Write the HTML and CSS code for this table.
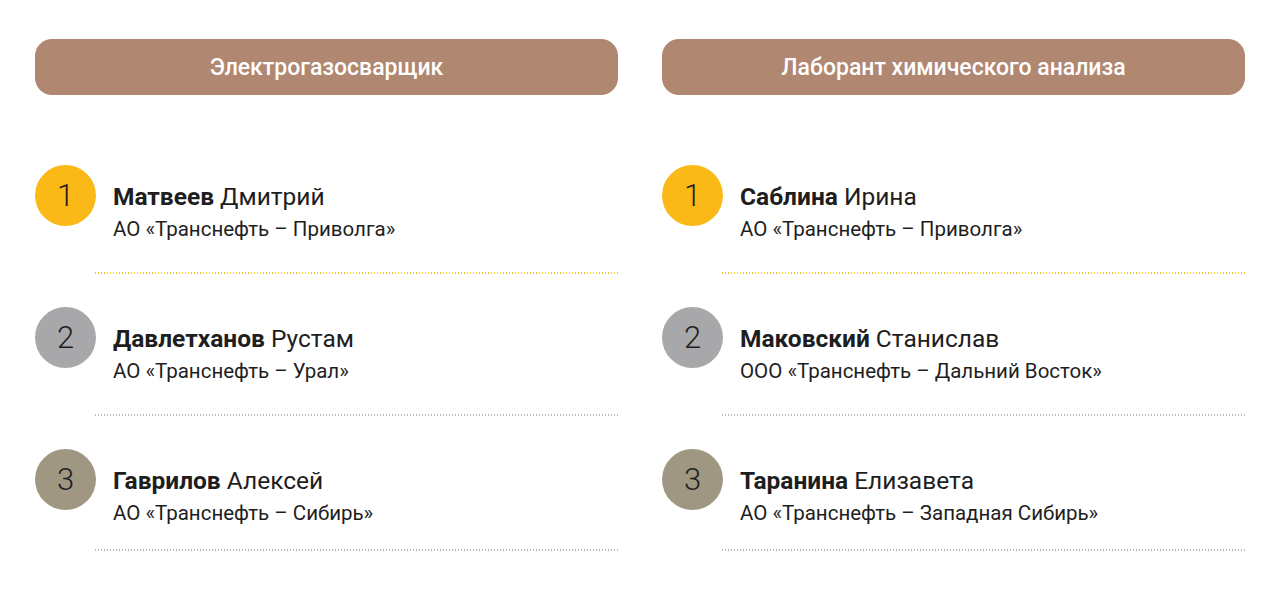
FILE: index.html
```html
<!DOCTYPE html>
<html lang="ru">
<head>
<meta charset="utf-8">
<title>Победители</title>
<link rel="stylesheet" href="styles.css">
</head>
<body>
<div class="page">
  <section class="col">
    <div class="head">Электрогазосварщик</div>
    <div class="row">
      <div class="place gold">1</div>
      <div class="info">
        <div class="name"><b>Матвеев</b> Дмитрий</div>
        <div class="org">АО «Транснефть – Приволга»</div>
      </div>
    </div>
    <div class="line line-gold"></div>
    <div class="row">
      <div class="place silver">2</div>
      <div class="info">
        <div class="name"><b>Давлетханов</b> Рустам</div>
        <div class="org">АО «Транснефть – Урал»</div>
      </div>
    </div>
    <div class="line"></div>
    <div class="row">
      <div class="place bronze">3</div>
      <div class="info">
        <div class="name"><b>Гаврилов</b> Алексей</div>
        <div class="org">АО «Транснефть – Сибирь»</div>
      </div>
    </div>
    <div class="line line-last"></div>
  </section>
  <section class="col">
    <div class="head">Лаборант химического анализа</div>
    <div class="row">
      <div class="place gold">1</div>
      <div class="info">
        <div class="name"><b>Саблина</b> Ирина</div>
        <div class="org">АО «Транснефть – Приволга»</div>
      </div>
    </div>
    <div class="line line-gold"></div>
    <div class="row">
      <div class="place silver">2</div>
      <div class="info">
        <div class="name"><b>Маковский</b> Станислав</div>
        <div class="org">ООО «Транснефть – Дальний Восток»</div>
      </div>
    </div>
    <div class="line"></div>
    <div class="row">
      <div class="place bronze">3</div>
      <div class="info">
        <div class="name"><b>Таранина</b> Елизавета</div>
        <div class="org">АО «Транснефть – Западная Сибирь»</div>
      </div>
    </div>
    <div class="line line-last"></div>
  </section>
</div>
</body>
</html>
```

FILE: styles.css
```css
* { box-sizing: border-box; }
html, body {
  margin: 0;
  padding: 0;
  background: #fff;
}
body {
  font-family: Roboto, "Noto Sans", "Liberation Sans", sans-serif;
  color: #1e1e1e;
}
.page {
  display: grid;
  grid-template-columns: 585px 585px;
  column-gap: 42px;
  padding: 39px 0 0 35px;
}
.col {
  display: flex;
  flex-direction: column;
}
.head {
  width: 583px;
  height: 56px;
  border-radius: 17px;
  background: #b08770;
  color: #fff;
  font-size: 23px;
  font-weight: 500;
  display: flex;
  align-items: center;
  justify-content: center;
  margin-bottom: 70px;
}
.row {
  display: flex;
  align-items: flex-start;
  gap: 17px;
  height: 61px;
}
.line + .row { margin-top: 33px; }
.place {
  width: 61px;
  height: 61px;
  border-radius: 50%;
  flex: none;
  display: flex;
  align-items: center;
  justify-content: center;
  font-size: 31px;
  font-weight: 300;
  color: #1e1e1e;
}
.gold { background: #fab917; }
.silver { background: #a8a8ab; }
.bronze { background: #9f9782; }
.info {
  padding-top: 18px;
}
.name {
  font-size: 24.5px;
  line-height: 28px;
  color: #1e1e1e;
  white-space: nowrap;
}
.name b { font-weight: 700; }
.org {
  margin-top: 6px;
  font-size: 20.5px;
  line-height: 24px;
  color: #1e1e1e;
  white-space: nowrap;
}
.line {
  margin-top: 46px;
  margin-left: 60px;
  height: 2px;
  background-image: linear-gradient(to right, #b9b9b9 1.5px, transparent 1.5px);
  background-size: 3px 2px;
  background-repeat: repeat-x;
}
.line-gold {
  background-image: linear-gradient(to right, #f2c530 1.5px, transparent 1.5px);
}
.line-last { margin-top: 39px; }
```
